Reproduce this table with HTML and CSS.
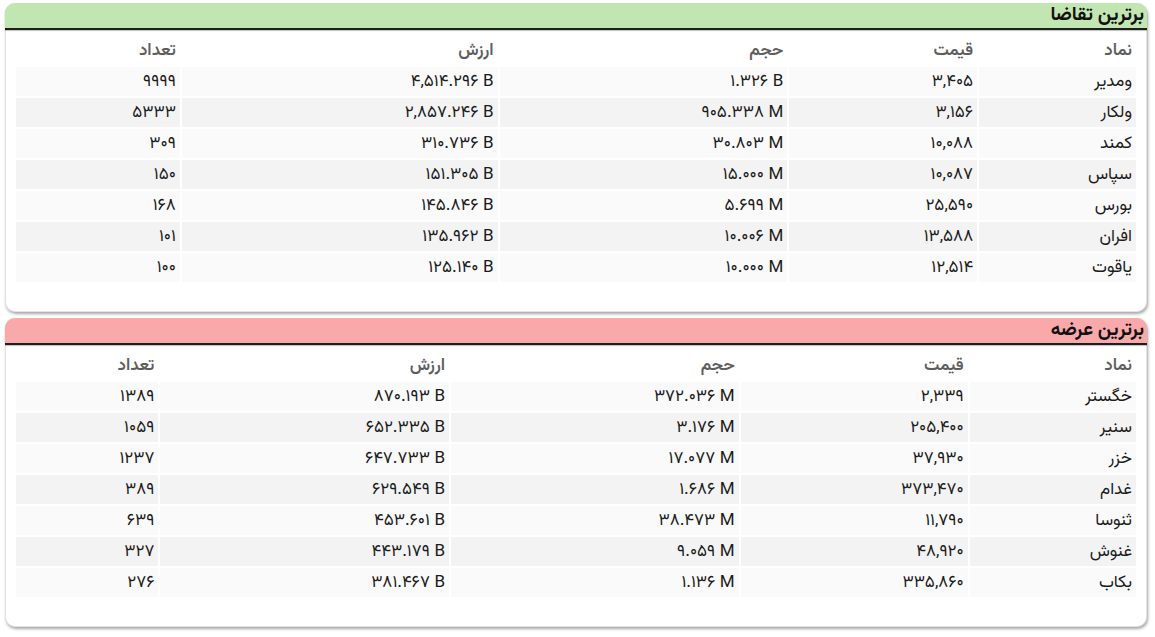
FILE: index.html
```html
<!DOCTYPE html>
<html lang="fa" dir="rtl">
<head>
<meta charset="utf-8">
<title>برترین تقاضا و عرضه</title>
<link rel="stylesheet" href="styles.css">
</head>
<body>
<section class="panel panel-demand">
  <h2 class="panel-title">برترین تقاضا</h2>
  <div class="panel-body">
    <table class="grid grid-demand">
      <thead>
        <tr><th>نماد</th><th>قیمت</th><th>حجم</th><th>ارزش</th><th>تعداد</th></tr>
      </thead>
      <tbody>
        <tr><td>ومدیر</td><td>۳,۴۰۵</td><td><span class="ltr">۱.۳۲۶ B</span></td><td><span class="ltr">۴,۵۱۴.۲۹۶ B</span></td><td>۹۹۹۹</td></tr>
        <tr><td>ولکار</td><td>۳,۱۵۶</td><td><span class="ltr">۹۰۵.۳۳۸ M</span></td><td><span class="ltr">۲,۸۵۷.۲۴۶ B</span></td><td>۵۳۳۳</td></tr>
        <tr><td>کمند</td><td>۱۰,۰۸۸</td><td><span class="ltr">۳۰.۸۰۳ M</span></td><td><span class="ltr">۳۱۰.۷۳۶ B</span></td><td>۳۰۹</td></tr>
        <tr><td>سپاس</td><td>۱۰,۰۸۷</td><td><span class="ltr">۱۵.۰۰۰ M</span></td><td><span class="ltr">۱۵۱.۳۰۵ B</span></td><td>۱۵۰</td></tr>
        <tr><td>بورس</td><td>۲۵,۵۹۰</td><td><span class="ltr">۵.۶۹۹ M</span></td><td><span class="ltr">۱۴۵.۸۴۶ B</span></td><td>۱۶۸</td></tr>
        <tr><td>افران</td><td>۱۳,۵۸۸</td><td><span class="ltr">۱۰.۰۰۶ M</span></td><td><span class="ltr">۱۳۵.۹۶۲ B</span></td><td>۱۰۱</td></tr>
        <tr><td>یاقوت</td><td>۱۲,۵۱۴</td><td><span class="ltr">۱۰.۰۰۰ M</span></td><td><span class="ltr">۱۲۵.۱۴۰ B</span></td><td>۱۰۰</td></tr>
      </tbody>
    </table>
  </div>
</section>
<section class="panel panel-supply">
  <h2 class="panel-title">برترین عرضه</h2>
  <div class="panel-body">
    <table class="grid grid-supply">
      <thead>
        <tr><th>نماد</th><th>قیمت</th><th>حجم</th><th>ارزش</th><th>تعداد</th></tr>
      </thead>
      <tbody>
        <tr><td>خگستر</td><td>۲,۳۳۹</td><td><span class="ltr">۳۷۲.۰۳۶ M</span></td><td><span class="ltr">۸۷۰.۱۹۳ B</span></td><td>۱۳۸۹</td></tr>
        <tr><td>سنیر</td><td>۲۰۵,۴۰۰</td><td><span class="ltr">۳.۱۷۶ M</span></td><td><span class="ltr">۶۵۲.۳۳۵ B</span></td><td>۱۰۵۹</td></tr>
        <tr><td>خزر</td><td>۳۷,۹۳۰</td><td><span class="ltr">۱۷.۰۷۷ M</span></td><td><span class="ltr">۶۴۷.۷۳۳ B</span></td><td>۱۲۳۷</td></tr>
        <tr><td>غدام</td><td>۳۷۳,۴۷۰</td><td><span class="ltr">۱.۶۸۶ M</span></td><td><span class="ltr">۶۲۹.۵۴۹ B</span></td><td>۳۸۹</td></tr>
        <tr><td>ثنوسا</td><td>۱۱,۷۹۰</td><td><span class="ltr">۳۸.۴۷۳ M</span></td><td><span class="ltr">۴۵۳.۶۰۱ B</span></td><td>۶۳۹</td></tr>
        <tr><td>غنوش</td><td>۴۸,۹۲۰</td><td><span class="ltr">۹.۰۵۹ M</span></td><td><span class="ltr">۴۴۳.۱۷۹ B</span></td><td>۳۲۷</td></tr>
        <tr><td>بکاب</td><td>۳۳۵,۸۶۰</td><td><span class="ltr">۱.۱۳۶ M</span></td><td><span class="ltr">۳۸۱.۴۶۷ B</span></td><td>۲۷۶</td></tr>
      </tbody>
    </table>
  </div>
</section>
</body>
</html>
```
FILE: styles.css
```css
html, body {
  margin: 0;
  padding: 0;
  background: #ffffff;
}
body {
  padding: 3px 8px 0 5px;
  font-family: "Vazirmatn", "Noto Sans Arabic", "DejaVu Sans", sans-serif;
  color: #1a1a1a;
  direction: rtl;
}
.panel {
  background: #ffffff;
  border: 1px solid #e2e2e2;
  border-top: none;
  border-radius: 10px;
  box-shadow: 1px 2px 3px rgba(0, 0, 0, 0.35);
  margin-bottom: 6px;
}
.panel-title {
  margin: 0 -1px 0 -1px;
  height: 25px;
  display: flex;
  align-items: center;
  padding: 0 3px 0 0;
  font-size: 19px;
  line-height: 1;
  font-weight: bold;
  color: #111;
  border-bottom: 2px solid #1e1e1e;
  border-radius: 10px 10px 0 0;
  box-shadow: 0 1px 1px rgba(0, 0, 0, 0.25);
}
.panel-demand .panel-title {
  background: #c2e6b2;
}
.panel-supply .panel-title {
  background: #f9a9aa;
}
.panel-body {
  padding: 5px 8px 27px 8px;
}
.grid {
  width: 100%;
  border-collapse: separate;
  border-spacing: 2px;
  font-size: 17px;
}
.grid th {
  height: 28px;
  padding: 0 4px;
  text-align: right;
  font-weight: 600;
  color: #5e5e5e;
  vertical-align: middle;
}
.grid td {
  height: 29px;
  padding: 0 4px;
  text-align: right;
  vertical-align: middle;
  color: #1c1c1c;
}
.grid tbody tr:nth-child(odd) td {
  background: #fafafa;
}
.grid tbody tr:nth-child(even) td {
  background: #f3f3f3;
}
.ltr {
  direction: ltr;
  unicode-bidi: isolate;
}
.grid-demand th:nth-child(1) { width: 149px; }
.grid-demand th:nth-child(2) { width: 180px; }
.grid-demand th:nth-child(3) { width: 280px; }
.grid-demand th:nth-child(4) { width: 308px; }
.grid-demand th:nth-child(5) { width: 156px; }
.grid-supply th:nth-child(1) { width: 159px; }
.grid-supply th:nth-child(2) { width: 220px; }
.grid-supply th:nth-child(3) { width: 281px; }
.grid-supply th:nth-child(4) { width: 282px; }
.grid-supply th:nth-child(5) { width: 135px; }
```
